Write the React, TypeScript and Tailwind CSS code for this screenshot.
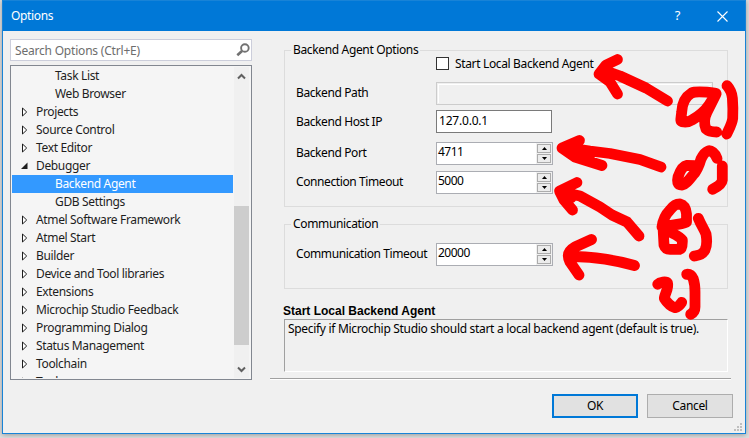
import React from "react";

type TreeItem = { label: string; state: "leaf" | "closed" | "open"; selected?: boolean };

const items: TreeItem[] = [
  { label: "Task List", state: "leaf" },
  { label: "Web Browser", state: "leaf" },
  { label: "Projects", state: "closed" },
  { label: "Source Control", state: "closed" },
  { label: "Text Editor", state: "closed" },
  { label: "Debugger", state: "open" },
  { label: "Backend Agent", state: "leaf", selected: true },
  { label: "GDB Settings", state: "leaf" },
  { label: "Atmel Software Framework", state: "closed" },
  { label: "Atmel Start", state: "closed" },
  { label: "Builder", state: "closed" },
  { label: "Device and Tool libraries", state: "closed" },
  { label: "Extensions", state: "closed" },
  { label: "Microchip Studio Feedback", state: "closed" },
  { label: "Programming Dialog", state: "closed" },
  { label: "Status Management", state: "closed" },
  { label: "Toolchain", state: "closed" },
  { label: "Tools", state: "closed" },
];

function Expander({ open }: { open: boolean }) {
  return (
    <svg width="9" height="10" viewBox="0 0 9 10" className="ml-[9px] mr-[6px] shrink-0">
      {open ? (
        <path d="M6.5 1.5v6.5H0z" fill="#1e1e1e" />
      ) : (
        <path d="M1.5 1v8L5.7 5z" fill="#fff" stroke="#1e1e1e" strokeWidth="1" />
      )}
    </svg>
  );
}

function TreeRow({ item }: { item: TreeItem }) {
  return (
    <div
      className={`flex h-[18px] shrink-0 items-center whitespace-nowrap ${
        item.selected ? "bg-[#3399ff] text-white" : "text-[#1e1e1e]"
      }`}
    >
      {item.state === "leaf" ? <span className="w-[43px]" /> : <Expander open={item.state === "open"} />}
      <span>{item.label}</span>
    </div>
  );
}

function Spinner({ value }: { value: string }) {
  return (
    <div className="flex h-[23px] w-[117px] border border-[#abadb3] bg-white">
      <span className="flex-1 pl-px leading-[18px] tracking-[-0.5px]">{value}</span>
      <div className="flex w-[16px] flex-col bg-[#f0f0f0] p-px">
        <div className="flex h-[9px] items-center justify-center border border-[#acacac] bg-[#ececec]">
          <svg width="5" height="3" viewBox="0 0 5 3"><path d="M0 3L2.5 0L5 3z" /></svg>
        </div>
        <div className="mt-px flex h-[9px] items-center justify-center border border-[#acacac] bg-[#ececec]">
          <svg width="5" height="3" viewBox="0 0 5 3"><path d="M0 0L2.5 3L5 0z" /></svg>
        </div>
      </div>
    </div>
  );
}

function Field({ label, className, children }: { label: string; className: string; children: React.ReactNode }) {
  return (
    <div className={`flex h-[23px] pl-[11px] ${className}`}>
      <span className="w-[140px] shrink-0 whitespace-nowrap tracking-[-0.4px]">{label}</span>
      {children}
    </div>
  );
}

function Markup() {
  return (
    <svg
      className="pointer-events-none absolute left-0 top-0"
      width="749"
      height="438"
      viewBox="0 0 749 438"
      fill="none"
      stroke="#ff0000"
      strokeWidth="10.8"
      strokeLinecap="round"
      strokeLinejoin="round"
    >
      <path d="M617.5 59.5L606 65L599 74L610 82L617.5 94M603 74L610 77M606 71L620 76L646 88L667.5 101" />
      <path d="M716 93.3C706 92 696 91 691.5 93C685 97 682 104 681.7 112C681 119 680 121 682 121.7C686 122.5 689 122 692 120C699 116 705 111 709 105L716 94L707 112C704 118 704 124 706 129C709 132 713 132 716.7 132M727 85.7C730 89 732 94 732.4 98.3C733 106 733 113 732.7 118.3C732 124 729 129 726.7 134" />
      <path d="M579.5 140.5L562 148L575 157L602 165.5M570 148L590 151L610 153.5L640 159.5L661 167M575 150L590 160M568 150L580 157M576 147L580 151" />
      <path d="M717 158.3C715 153 711 150 708 151C705 152 703 155 701 159C699 166 696 172 693 175C689 180 686 184 682 185C677 185 677 181 678 177C680 171 683 166 687 165.3L695 165.7M722.3 166V180C722 184 717 187 712.7 189.3" />
      <path d="M577 182.5L559.5 191L564 200L572.5 210M562 192L580 196L600 207L612 215L627 222L639 236M564 192L571 198" />
      <path d="M662 227C663 219 666 214 670 210C674 205 676 204 680 204C684 205 686 209 686.5 214V222C680 225 670 225 663 227L664 245C665 248 667 249.3 670 249.3H680C682 249 682.5 245 682.3 240C680 236 673 234 663 228M698.3 218.3C701 225 704 229 706 234C707 240 707 246 705 250C702 255 699 255 694.3 256" />
      <path d="M591.5 239.5L575 247C568 251 567 256 570 262L579 275M574 256.5C594 257 612 259 634.5 265.5" />
      <path d="M657.7 284.3C660 282 666 281 667.5 283C669 288 665 293 664.3 298.3C666 301 670 306 675 307.7C678 307 680 305 681.7 302.3M686.7 274.3C690 274 692 276 693.3 279C695 284 695 288 695 292V307C695 310 693 313 690.7 314.3" />
    </svg>
  );
}

export default function App() {
  return (
    <div className="relative h-[438px] w-[749px] overflow-hidden bg-[#dedede] pl-[2px] font-['Noto_Sans','Open_Sans',sans-serif] text-[12px] tracking-[-0.35px] text-black">
      <div className="flex h-[434px] w-[744px] flex-col border border-t-0 border-[#1883d7] bg-[#f0f0f0] shadow-[0_1px_5px_#999]">
        <header className="flex h-[31px] shrink-0 items-center border-t border-[#1883d7] bg-[#0078d7] pl-[8px] text-white">
          <span className="flex-1">Options</span>
          <span className="mr-[37px] text-[13px]">?</span>
          <svg width="11" height="11" viewBox="0 0 11 11" className="mr-[17px]" stroke="#fff" strokeWidth="1.1">
            <path d="M.5.5l10 10M10.5.5l-10 10" />
          </svg>
        </header>

        <main className="flex h-[348px] shrink-0">
          <section className="ml-[7px] w-[242px] pt-[8px]">
            <div className="flex h-[22px] items-center border border-[#cccedb] bg-white pl-[4px] text-[#6d6d6d]">
              <span className="flex-1 pt-px tracking-[-0.2px]">Search Options (Ctrl+E)</span>
              <svg width="14" height="14" viewBox="0 0 14 14" className="mr-px" fill="none" stroke="#717171">
                <circle cx="8.9" cy="5" r="3.8" strokeWidth="1.9" />
                <path d="M6 8L1.3 12.3" strokeWidth="2.6" />
              </svg>
            </div>
            <div className="mt-[4px] flex h-[315px] border border-[#828790] bg-[#f5f5f5] p-px">
              <div className="flex h-[311px] w-[221px] flex-col overflow-hidden">
                {items.map((item) => (
                  <TreeRow key={item.label} item={item} />
                ))}
              </div>
              <div className="ml-px flex w-[15px] flex-col items-center bg-[#f0f0f0]">
                <svg width="9" height="7" viewBox="0 0 9 7" className="mt-[6px]" fill="none" stroke="#606060" strokeWidth="2">
                  <path d="M1 5.5L4.5 2L8 5.5" />
                </svg>
                <div className="mt-[126px] h-[139px] w-full bg-[#cdcdcd]" />
                <svg width="9" height="7" viewBox="0 0 9 7" className="mt-[21px]" fill="none" stroke="#606060" strokeWidth="2">
                  <path d="M1 1.5L4.5 5L8 1.5" />
                </svg>
              </div>
            </div>
          </section>

          <section className="ml-[18px] w-[461px] border-b border-[#a0a0a0] pl-[14px] shadow-[0_1px_0_#fff]">
            <div className="mt-[19px] h-[157px] w-[444px] border border-[#dcdcdc]">
              <div className="-mt-[10px] ml-[6px] h-[16px] w-fit bg-[#f0f0f0] px-[2px] leading-[18px]">Backend Agent Options</div>
              <div className="ml-[151px] flex h-[13px] items-center">
                <span className="size-[13px] border border-[#333] bg-white" />
                <span className="ml-[6px] whitespace-nowrap leading-[13px]">Start Local Backend Agent</span>
              </div>
              <Field label="Backend Path" className="mt-[12px] leading-[22px]">
                <div className="w-[277px] border border-[#ccc] p-px">
                  <div className="size-full border-l border-t border-white" />
                </div>
              </Field>
              <Field label="Backend Host IP" className="mt-[5px] leading-[24px]">
                <div className="w-[116px] border border-[#7a7a7a] bg-white pl-[2px] leading-[19px] tracking-[-0.2px]">127.0.0.1</div>
              </Field>
              <Field label="Backend Port" className="mt-[9px] leading-[22px]"><Spinner value="4711" /></Field>
              <Field label="Connection Timeout" className="mt-[6px] leading-[22px]"><Spinner value="5000" /></Field>
            </div>
            <div className="mt-[17px] h-[65px] w-[444px] border border-[#dcdcdc]">
              <div className="-mt-[10px] ml-[6px] h-[16px] w-fit bg-[#f0f0f0] px-[2px] leading-[18px]">Communication</div>
              <Field label="Communication Timeout" className="mt-[12px] leading-[21px]"><Spinner value="20000" /></Field>
            </div>
            <div className="-ml-px mt-[14px] h-[16px] font-['Liberation_Sans',sans-serif] font-bold leading-[16px] tracking-normal">
              Start Local Backend Agent
            </div>
            <div className="h-[53px] w-[444px] whitespace-nowrap border border-b-white border-l-[#a0a0a0] border-r-white border-t-[#a0a0a0] pl-[3px] leading-[17px] tracking-[-0.31px]">
              Specify if Microchip Studio should start a local backend agent (default is true).
            </div>
          </section>
        </main>

        <footer className="mt-[15px] flex gap-[9px] pl-[549px]">
          <button className="h-[24px] w-[86px] border-2 border-[#0078d7] bg-[#e1e1e1]">OK</button>
          <button className="h-[24px] w-[86px] border border-[#adadad] bg-[#e1e1e1]">Cancel</button>
        </footer>
        <svg width="8" height="8" viewBox="0 0 8 8" className="ml-auto mr-[3px] mt-[5px]" fill="#bfbfbf">
          <path d="M6 0h2v2H6zM3 3h2v2H3zM6 3h2v2H6zM0 6h2v2H0zM3 6h2v2H3zM6 6h2v2H6z" />
        </svg>
      </div>
      <Markup />
    </div>
  );
}
